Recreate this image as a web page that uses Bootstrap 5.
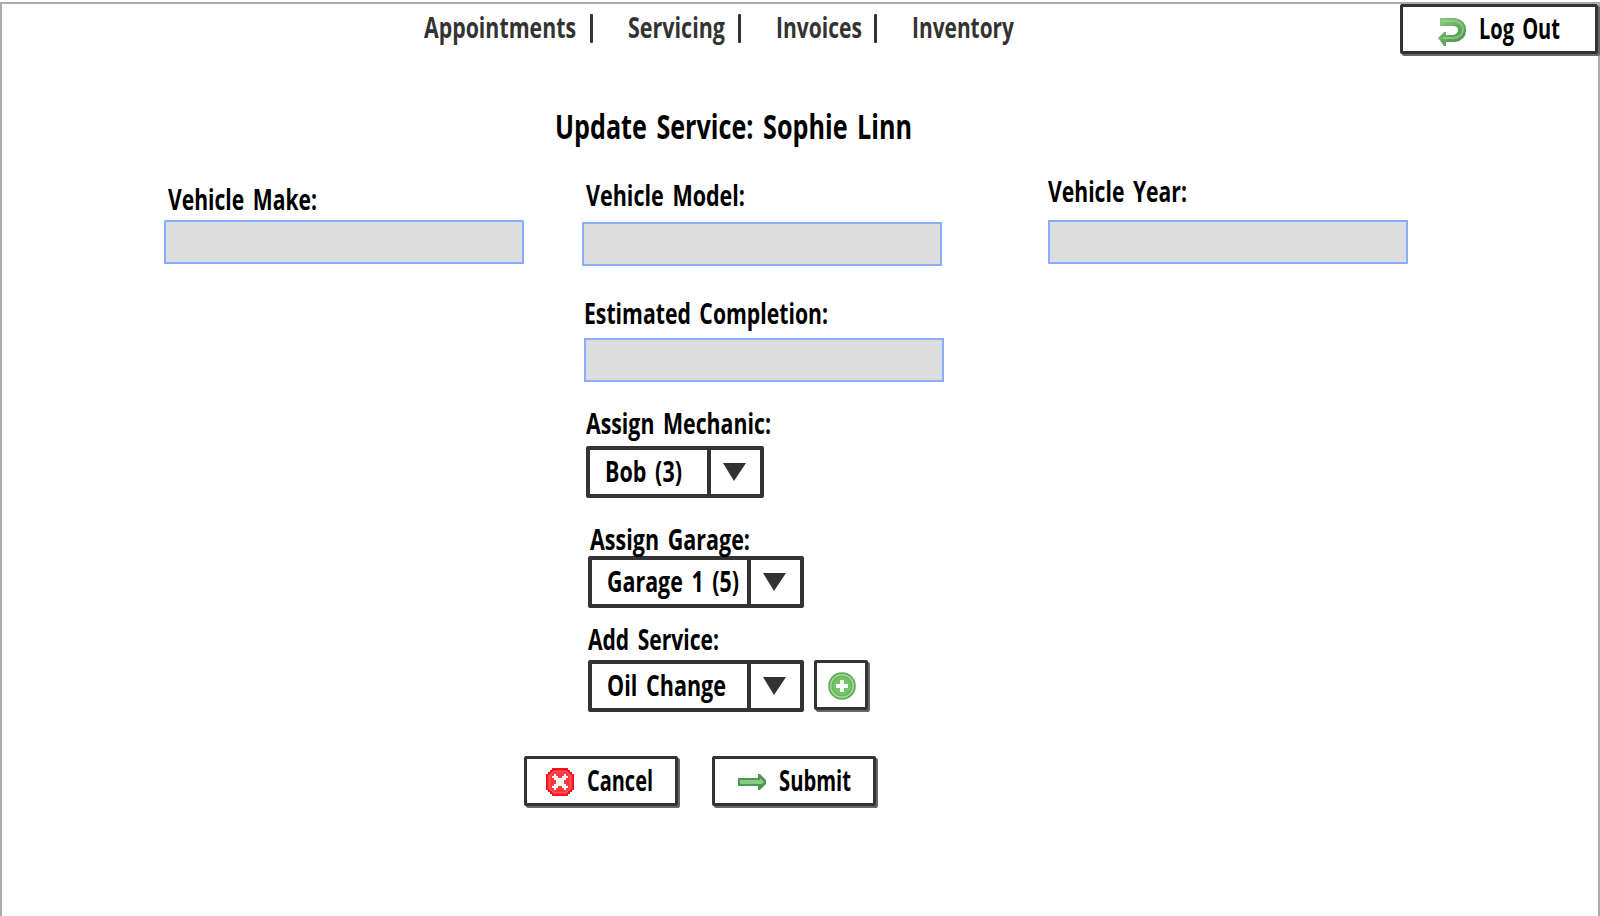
<!DOCTYPE html>
<html lang="en">
<head>
<meta charset="utf-8">
<meta name="viewport" content="width=device-width, initial-scale=1">
<title>Update Service</title>
<link href="https://cdn.jsdelivr.net/npm/bootstrap@5.3.0/dist/css/bootstrap.min.css" rel="stylesheet">
<style>
  body{background:#fff;color:#000;font-family:"Open Sans","Noto Sans",sans-serif;font-size:28px;line-height:38px;font-weight:700;overflow:hidden}
  .frame{margin-top:2px;height:914px;border:2px solid #aaa;border-bottom:0}
  .fit{display:inline-block;white-space:nowrap;transform-origin:0 0;word-spacing:4px}
  .topbar{height:52px}
  .site-nav{margin-left:422px;padding-top:4px;color:#333;width:976px}
  .site-nav a{color:inherit;text-decoration:none}
  .bar{width:3px;height:29px;background:#333;border-radius:1px;margin-top:6px}
  .n1{margin-left:14px;margin-right:35px}.n2{margin-left:13px;margin-right:35px}.n3{margin-left:12px;margin-right:35px}
  h1.title{font-size:34px;line-height:46px;font-weight:700;margin:47px 0 0 553px}
  .fields{margin-left:162px;margin-top:23px}
  .fields label,.lbl{display:block;height:38px}
  .box{display:block;width:360px;height:44px;background:#ddd;border:2px solid #8aaeff;border-radius:0;padding:0 10px}
  .col-a{width:360px;padding-top:8px}
  .col-b{width:360px;margin-left:58px;padding-top:4px}
  .col-c{width:360px;margin-left:106px}
  .pick{background:#fff;border:4px solid #333;border-radius:2px;height:52px;padding:0 0 0 15px;color:#000;font:inherit;line-height:38px}
  .pick .val{flex:1;text-align:left;height:38px;margin-top:2px}
  .pick .arr{width:53px;height:44px;border-left:4px solid #333;display:flex}
  .pick svg{margin:13px 0 0 12px}
  .w1{width:178px}.w2{width:216px}
  .act{background:#fff;border:3px solid #333;border-radius:2px;height:50px;color:#000;font:inherit;line-height:38px;padding:0;box-shadow:2px 2px 0 #666;display:flex}
  .act svg{flex:none}
  .logout{width:198px;padding-left:35px}
  .plus{width:54px;padding:9px 0 0 11px}
  .cancel{width:154px;padding-left:19px}
  .submit{width:164px;padding-left:23px}
  .act .t{height:38px;margin-top:2px}
  .actions{margin:44px 0 0 522px;gap:34px}
</style>
</head>
<body>
<div class="frame">
  <header class="topbar d-flex align-items-start">
    <nav class="site-nav d-flex align-items-start">
      <a href="#"><span class="fit" data-w="152">Appointments</span></a><i class="bar n1"></i>
      <a href="#"><span class="fit" data-w="97">Servicing</span></a><i class="bar n2"></i>
      <a href="#"><span class="fit" data-w="86">Invoices</span></a><i class="bar n3"></i>
      <a href="#"><span class="fit" data-w="102">Inventory</span></a>
    </nav>
    <button class="act logout">
      <svg width="28" height="28" viewBox="0 0 28 28" style="margin-top:11px"><defs><linearGradient id="g" x1="0" y1="0" x2="1" y2="1"><stop offset="0" stop-color="#8bd07f"/><stop offset="1" stop-color="#3d8744"/></linearGradient></defs><path d="M2 0H17Q28 2 28 12Q28 22 17 24H8V28H6L0 20L6 14H8V17H15Q20 16 20 12Q20 8 15 8H2Z" fill="url(#g)"/><path d="M4 3H16Q25 4 25 12Q24 19 16 20H5" fill="none" stroke="#a4dc98" stroke-width="2" opacity=".6"/></svg>
      <span class="t" style="margin-left:13px"><span class="fit" data-w="81">Log Out</span></span>
    </button>
  </header>
  <main>
    <h1 class="title"><span class="fit" data-w="357">Update Service: Sophie Linn</span></h1>
    <div class="fields d-flex align-items-start">
      <section class="col-a">
        <label for="make" class="ps-1"><span class="fit" data-w="149">Vehicle Make:</span></label>
        <input id="make" class="box" style="margin-top:2px">
      </section>
      <section class="col-b">
        <label for="model" class="ps-1"><span class="fit" data-w="159">Vehicle Model:</span></label>
        <input id="model" class="box" style="margin-top:8px">
        <label for="est" style="margin:28px 0 0 2px"><span class="fit" data-w="244">Estimated Completion:</span></label>
        <input id="est" class="box" style="margin:6px 0 0 2px">
        <div class="lbl" style="margin:22px 0 0 4px"><span class="fit" data-w="185">Assign Mechanic:</span></div>
        <button class="pick w1 d-flex" style="margin:4px 0 0 4px"><span class="val"><span class="fit" data-w="77">Bob (3)</span></span><span class="arr"><svg width="23" height="18"><path d="M0 0H23L11 18Z" fill="#333"/></svg></span></button>
        <div class="lbl" style="margin:22px 0 0 8px"><span class="fit" data-w="160">Assign Garage:</span></div>
        <button class="pick w2 d-flex" style="margin:-2px 0 0 6px"><span class="val"><span class="fit" data-w="132">Garage 1 (5)</span></span><span class="arr"><svg width="23" height="18"><path d="M0 0H23L11 18Z" fill="#333"/></svg></span></button>
        <div class="lbl" style="margin:12px 0 0 6px"><span class="fit" data-w="131">Add Service:</span></div>
        <div class="d-flex" style="margin:2px 0 0 6px;gap:10px">
          <button class="pick w2 d-flex"><span class="val"><span class="fit" data-w="119">Oil Change</span></span><span class="arr"><svg width="23" height="18"><path d="M0 0H23L11 18Z" fill="#333"/></svg></span></button>
          <button class="act plus" aria-label="Add"><svg width="28" height="28" viewBox="0 0 28 28"><circle cx="14" cy="14" r="13.8" fill="#5faa58"/><circle cx="14" cy="14" r="11.3" fill="#67b75f" stroke="#a8dc9f" stroke-width="1.4"/><circle cx="14" cy="14" r="9" fill="#74c464"/><path d="M12 8h4v4h4v4h-4v4h-4v-4H8v-4h4z" fill="#fff"/></svg></button>
        </div>
      </section>
      <section class="col-c">
        <label for="year"><span class="fit" data-w="139">Vehicle Year:</span></label>
        <input id="year" class="box" style="margin-top:10px">
      </section>
    </div>
    <div class="actions d-flex">
      <button class="act cancel">
        <svg width="28" height="28" viewBox="0 0 28 28" style="margin-top:9px"><path d="M6 0H22V2H24V4H26V6H28V22H26V24H24V26H22V28H6V26H4V24H2V22H0V6H2V4H4V2H6Z" fill="#fb0f1b"/><path d="M8 3H20L25 8V20L20 25H8L3 20V8Z" fill="#fa3a40" stroke="#fd6466" stroke-width="1.2"/><path d="M6 8H8V6H10V8H12V10H16V8H18V6H20V8H22V10H20V12H18V16H20V18H22V20H20V22H18V20H16V18H12V20H10V22H8V20H6V18H8V16H10V12H8V10H6Z" fill="#fff0f0"/></svg>
        <span class="t" style="margin-left:13px"><span class="fit" data-w="66">Cancel</span></span>
      </button>
      <button class="act submit">
        <svg width="28" height="16" viewBox="0 0 28 16" style="margin-top:15px"><path d="M0 4H20V0H22L28 6V10L22 16H20V12H0Z" fill="#4c9950"/><path d="M2 6H22V4L26 8L24 10H2Z" fill="#8bc987"/></svg>
        <span class="t" style="margin-left:13px"><span class="fit" data-w="72">Submit</span></span>
      </button>
    </div>
  </main>
</div>
<script src="https://cdn.jsdelivr.net/npm/bootstrap@5.3.0/dist/js/bootstrap.bundle.min.js"></script>
<script>
  // Condense each label to its set width
  document.querySelectorAll('.fit').forEach(function(e){
    var n=e.getBoundingClientRect().width,w=+e.dataset.w;
    e.style.transform='scaleX('+w/n+')';
    e.style.marginRight=(w-n)+'px';
  });
</script>
</body>
</html>
